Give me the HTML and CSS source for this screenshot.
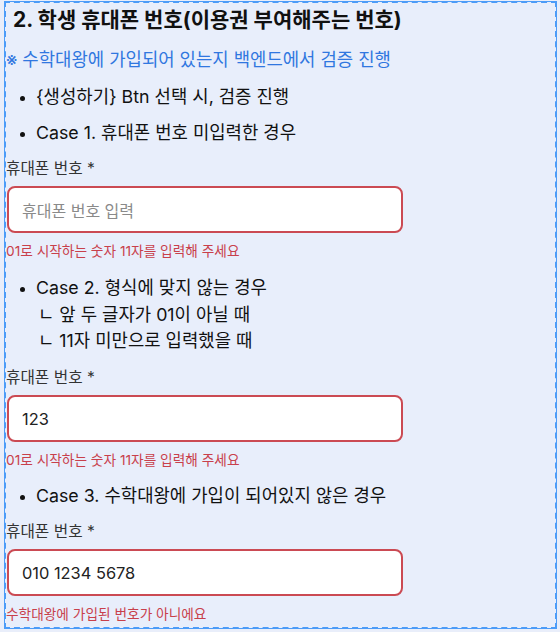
FILE: index.html
```html
<!DOCTYPE html>
<html lang="ko">
<head>
<meta charset="utf-8">
<link rel="stylesheet" href="styles.css">
</head>
<body>
<div class="frame">
  <h2 class="title">2. 학생 휴대폰 번호(이용권 부여해주는 번호)</h2>
  <p class="note">※ 수학대왕에 가입되어 있는지 백엔드에서 검증 진행</p>
  <ul class="list">
    <li>{생성하기} Btn 선택 시, 검증 진행</li>
    <li>Case 1. 휴대폰 번호 미입력한 경우</li>
  </ul>
  <div class="field field-1">
    <label class="label">휴대폰 번호 *</label>
    <div class="input placeholder">휴대폰 번호 입력</div>
    <p class="error">01로 시작하는 숫자 11자를 입력해 주세요</p>
  </div>
  <ul class="list list-after">
    <li>Case 2. 형식에 맞지 않는 경우
      <div class="sub">ㄴ 앞 두 글자가 01이 아닐 때</div>
      <div class="sub">ㄴ 11자 미만으로 입력했을 때</div>
    </li>
  </ul>
  <div class="field field-2">
    <label class="label">휴대폰 번호 *</label>
    <div class="input">123</div>
    <p class="error">01로 시작하는 숫자 11자를 입력해 주세요</p>
  </div>
  <ul class="list list-after list-3">
    <li>Case 3. 수학대왕에 가입이 되어있지 않은 경우</li>
  </ul>
  <div class="field field-3">
    <label class="label">휴대폰 번호 *</label>
    <div class="input">010 1234 5678</div>
    <p class="error">수학대왕에 가입된 번호가 아니에요</p>
  </div>
</div>
</body>
</html>
```

FILE: styles.css
```css
html, body {
  margin: 0;
  padding: 0;
  background: #e9eefa;
}
body {
  font-family: "Inter", "Noto Sans CJK KR", sans-serif;
  color: #111;
}
.frame {
  margin: 1px 3px 0 4px;
  height: 628px;
  box-sizing: border-box;
  border: 2px dashed #4c9cf8;
  outline: 1px solid #4c9cf8;
  outline-offset: -1px;
  background: #e8eefb;
  padding: 0;
}
.title {
  margin: 2px 0 0 7px;
  font-size: 21px;
  font-weight: 700;
  line-height: 30px;
}
.note {
  margin: 11px 0 0 0;
  font-size: 17.8px;
  line-height: 28px;
  color: #3077e0;
}
.list {
  margin: 0;
  padding: 0 0 0 30px;
  font-size: 17.8px;
}
.list li {
  line-height: 28px;
  margin-top: 8px;
}
.list li:first-child {
  margin-top: 9px;
}
.list-after li:first-child {
  margin-top: 13px;
}
.list-3 li:first-child {
  margin-top: 12px;
}
.list li::marker {
  font-size: 14px;
}
.sub {
  padding-left: 2px;
  line-height: 26px;
}
.field {
  margin-top: 11px;
  display: flex;
  flex-direction: column;
}
.field-2 {
  margin-top: 13px;
}
.label {
  font-size: 15.7px;
  line-height: 22px;
  color: #333;
}
.input {
  margin: 6px 0 0 1px;
  width: 396px;
  height: 47px;
  box-sizing: border-box;
  border: 2px solid #cb4a53;
  border-radius: 8px;
  background: #fff;
  padding: 0 0 0 13px;
  display: flex;
  align-items: center;
  font-size: 16.4px;
  color: #222;
}
.placeholder {
  color: #8a8a8a;
  font-size: 16px;
}
.error {
  margin: 8px 0 0 0;
  font-size: 13.7px;
  line-height: 20px;
  color: #c8404b;
}
```
